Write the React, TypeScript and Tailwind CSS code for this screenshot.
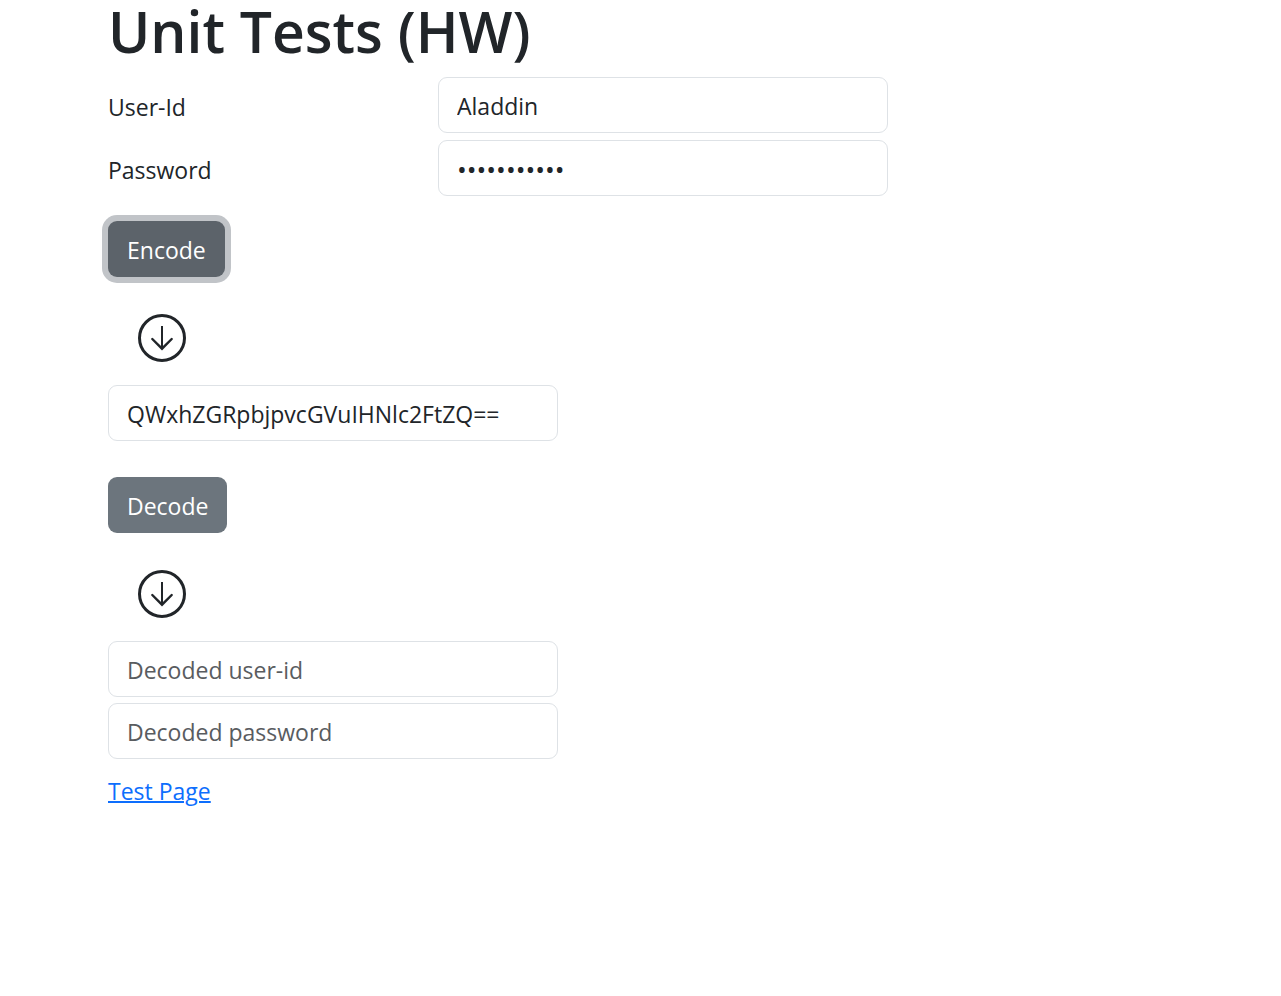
import React from "react";

const field =
  "h-14 w-[450px] max-w-full rounded-[9px] border border-[#dee2e6] bg-white px-[18px] pt-0.5 text-[#212529] placeholder:text-[#595c5f] placeholder:opacity-100 outline-none";
const button = "h-14 rounded-[9px] px-[19px] pt-0.5 text-[23px] text-white outline-none";
const label = "w-[330px] shrink-0 pt-1";

function DownArrow() {
  return (
    <svg viewBox="0 0 48 48" className="mt-[37px] ml-[30px] size-12" fill="none" stroke="currentColor" aria-hidden="true">
      <circle cx="24" cy="24" r="22.5" strokeWidth="3" />
      <path d="M24 12v22" strokeWidth="2" />
      <path d="M14.3 25l9.7 9.7 9.7-9.7" strokeWidth="2.4" strokeLinecap="round" />
    </svg>
  );
}

export default function App() {
  return (
    <main className="min-h-screen bg-white px-[108px] font-['Open_Sans','Noto_Sans',sans-serif] text-[23px] text-[#212529]">
      <h1 className="mb-[14px] text-[57px] leading-[63px] font-semibold">Unit Tests (HW)</h1>
      <div className="flex flex-col gap-[7px]">
        <div className="flex items-center">
          <label htmlFor="user" className={label}>User-Id</label>
          <input id="user" className={`${field} text-[23px]`} type="text" defaultValue="Aladdin" />
        </div>
        <div className="flex items-center">
          <label htmlFor="password" className={label}>Password</label>
          <input id="password" className={`${field} text-[26px]`} type="password" defaultValue="open sesame" />
        </div>
      </div>
      <div className="mt-[25px] flex flex-col items-start">
        <button type="button" className={`${button} bg-[#5c636a] ring-6 ring-[#c1c4c8]`}>Encode</button>
        <DownArrow />
        <input aria-label="Encoded credentials" className={`${field} mt-[23px] text-[23px]`} type="text" defaultValue="QWxhZGRpbjpvcGVuIHNlc2FtZQ==" />
      </div>
      <div className="mt-9 flex flex-col items-start">
        <button type="button" className={`${button} bg-[#6c757d]`}>Decode</button>
        <DownArrow />
        <input aria-label="Decoded user-id" className={`${field} mt-[23px] text-[23px]`} type="text" placeholder="Decoded user-id" />
        <input aria-label="Decoded password" className={`${field} mt-1.5 text-[23px]`} type="text" placeholder="Decoded password" />
      </div>
      <a href="#test" className="mt-[14px] inline-block leading-9 text-[#0d6efd] underline decoration-2">Test Page</a>
    </main>
  );
}
